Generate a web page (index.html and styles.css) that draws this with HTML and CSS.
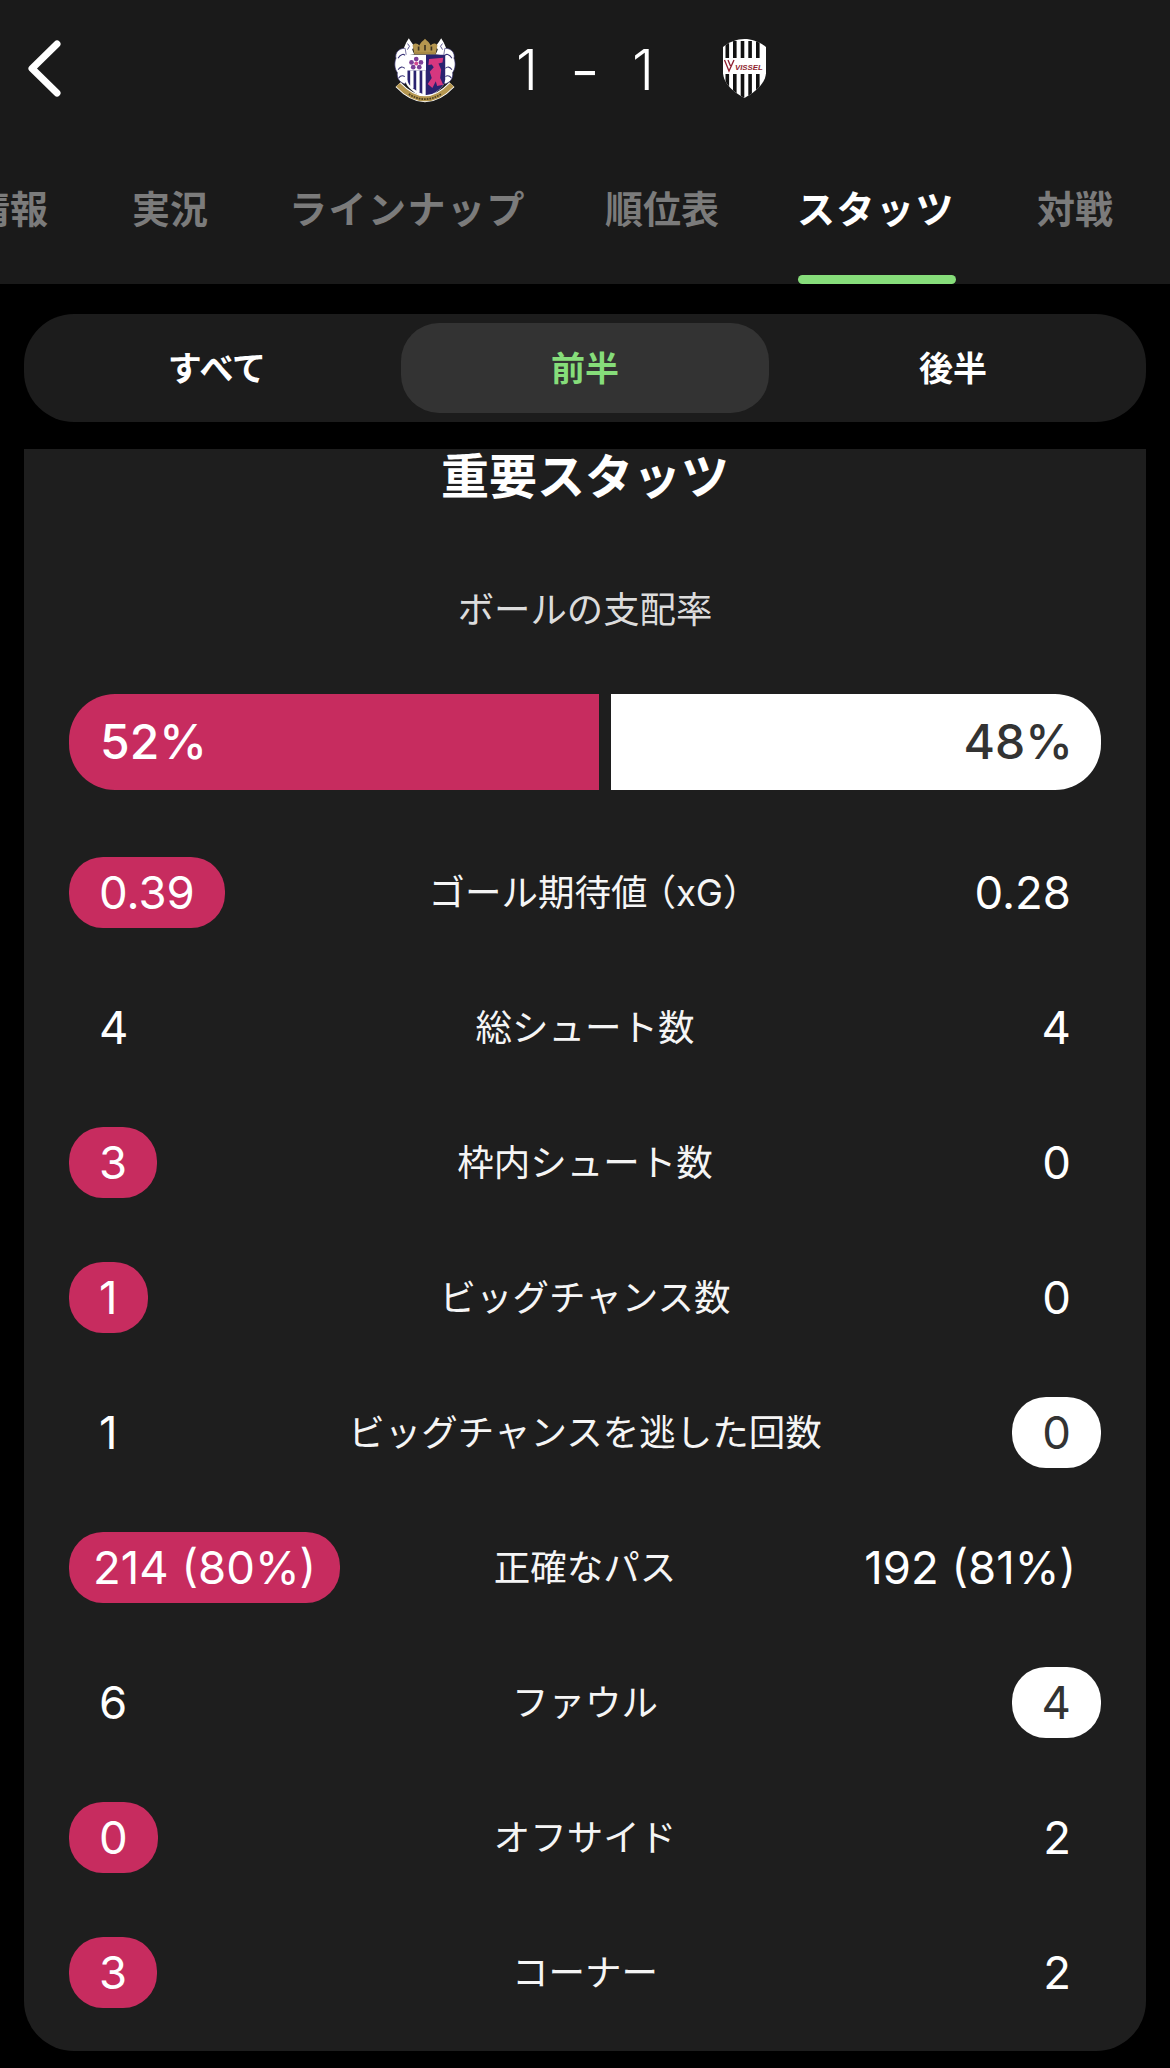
FILE: index.html
```html
<!DOCTYPE html>
<html lang="ja">
<head>
  <meta charset="UTF-8">
  <meta name="viewport" content="width=device-width, initial-scale=1.0">
  <title>スタッツ</title>
  <link rel="stylesheet" href="styles.css">
</head>
<body>
  <div class="header">
    <div class="topbar">
      <div class="topbar-left">
        <svg class="back" viewBox="0 0 33 57"><path d="M29 4 L4 28.500 L29 53" fill="none" stroke="#fff" stroke-width="7" stroke-linecap="round" stroke-linejoin="round"/></svg>
        <svg class="crest-home" viewBox="0 0 184 195">
          <defs>
            <g id="crestSide">
              <!-- griffin -->
              <path d="M28 32 L36 14 L44 0 L50 10 L60 24 L54 34 L60 48 L33 52 Z" fill="#fff"/>
              <path d="M40 16 L46 24 L40 34" fill="none" stroke="#3a3478" stroke-width="2.500"/>
              <!-- scroll -->
              <path d="M33 30 C14 30 2 44 6 60 C0 74 2 92 10 102 C8 116 14 130 32 136 L44 120 L36 48 Z" fill="#fff" stroke="#3a3478" stroke-width="2"/>
              <path d="M12 60 C20 46 30 46 34 52 M12 94 C18 84 26 84 32 90 M14 118 C20 110 26 110 32 114" fill="none" stroke="#3a3478" stroke-width="3"/>
            </g>
          </defs>
          <use href="#crestSide"/>
          <use href="#crestSide" transform="matrix(-1 0 0 1 184 0)"/>
          <!-- crown -->
          <path d="M60 44 L55 22 C61 13 70 15 75 22 C79 12 85 10 92 2 C99 10 105 12 109 22 C114 15 123 13 129 22 L124 44 Z" fill="#b4964f"/>
          <path d="M73 25 V37 M92 20 V37 M111 25 V37" stroke="#3e3522" stroke-width="5"/>
          <rect x="60" y="41" width="64" height="7" fill="#a88a45"/>
          <!-- shield -->
          <path d="M33 49 H152 V122 C152 146 118 168 92 176 C66 168 33 146 33 122 Z" fill="#fff"/>
          <path d="M95 49 H152 V122 C152 146 118 166 95 174 Z" fill="#2a2270"/>
          <path d="M40 96 H95 V170 C70 160 40 144 40 122 Z" fill="#2a2270"/>
          <path d="M48 96 H58 V148 H48 Z M66 96 H76 V160 H66 Z M84 96 H94 V170 H84 Z" fill="#fff"/>
          <!-- flower -->
          <circle cx="66" cy="62" r="7" fill="#7c3f98"/><circle cx="52" cy="72" r="7" fill="#7c3f98"/>
          <circle cx="80" cy="72" r="7" fill="#7c3f98"/><circle cx="57" cy="86" r="7" fill="#7c3f98"/>
          <circle cx="75" cy="86" r="7" fill="#7c3f98"/><circle cx="66" cy="75" r="6" fill="#d2488f"/>
          <!-- lion -->
          <path d="M104 62 L146 58 L144 72 L132 75 L140 94 L137 118 L146 138 L128 142 L124 128 L114 148 L100 136 L112 118 L106 100 L118 86 L112 78 L102 80 Z" fill="#d6377f"/>
          <!-- ribbon -->
          <path d="M12 138 Q92 222 172 138" fill="none" stroke="#fff" stroke-width="21"/>
          <path d="M12 138 Q92 222 172 138" fill="none" stroke="#b4964f" stroke-width="15"/>
          <path d="M44 166 Q92 196 140 166" fill="none" stroke="#4b3f20" stroke-width="5" stroke-dasharray="5 3"/>
        </svg>
      </div>
      <div class="score"><span>1</span><span class="dash">-</span><span>1</span></div>
      <div class="topbar-right">
        <svg class="crest-away" viewBox="0 0 45 61">
          <defs><clipPath id="awayShape"><path d="M22.500 1 C30 1 38 4 44 9 V34 C44 46 32 55 22.500 60 C13 55 1 46 1 34 V9 C7 4 15 1 22.500 1 Z"/></clipPath></defs>
          <path d="M22.500 1 C30 1 38 4 44 9 V34 C44 46 32 55 22.500 60 C13 55 1 46 1 34 V9 C7 4 15 1 22.500 1 Z" fill="#fff"/>
          <g clip-path="url(#awayShape)" fill="#111">
            <rect x="3.500" y="3" width="3.600" height="58"/><rect x="11" y="3" width="3.600" height="58"/>
            <rect x="18.700" y="3" width="3.600" height="58"/><rect x="26.300" y="3" width="3.600" height="58"/>
            <rect x="34" y="3" width="3.600" height="58"/>
          </g>
          <rect x="1" y="20" width="43" height="16" fill="#fff"/>
          <path d="M2.500 22 L7 33 L12 22 M6 22 L8.500 28" fill="none" stroke="#8f1f30" stroke-width="1.300"/>
          <text class="vissel" x="13" y="32">VISSEL</text>
        </svg>
      </div>
    </div>
    <div class="tabs">
      <div class="tab">情報</div>
      <div class="tab">実況</div>
      <div class="tab tab-lineup">ラインナップ</div>
      <div class="tab">順位表</div>
      <div class="tab active">スタッツ</div>
      <div class="tab">対戦</div>
    </div>
  </div>

  <div class="segment">
    <div class="seg-item">すべて</div>
    <div class="seg-item active">前半</div>
    <div class="seg-item">後半</div>
  </div>

  <div class="card">
    <h2 class="card-title">重要スタッツ</h2>
    <p class="possession-label">ボールの支配率</p>
    <div class="possession">
      <div class="poss-home" style="width: 530px">52%</div>
      <div class="poss-away">48%</div>
    </div>
    <div class="rows">
      <div class="row"><div class="val home-win">0.39</div><div class="label">ゴール期待値<span class="xg">（xG）</span></div><div class="val">0.28</div></div>
      <div class="row"><div class="val">4</div><div class="label">総シュート数</div><div class="val">4</div></div>
      <div class="row"><div class="val home-win">3</div><div class="label">枠内シュート数</div><div class="val">0</div></div>
      <div class="row"><div class="val home-win">1</div><div class="label">ビッグチャンス数</div><div class="val">0</div></div>
      <div class="row"><div class="val">1</div><div class="label">ビッグチャンスを逃した回数</div><div class="val away-win">0</div></div>
      <div class="row"><div class="val home-win tight">214 (80%)</div><div class="label">正確なパス</div><div class="val tight">192 (81%)</div></div>
      <div class="row"><div class="val">6</div><div class="label">ファウル</div><div class="val away-win">4</div></div>
      <div class="row"><div class="val home-win">0</div><div class="label">オフサイド</div><div class="val">2</div></div>
      <div class="row"><div class="val home-win">3</div><div class="label">コーナー</div><div class="val">2</div></div>
    </div>
  </div>
</body>
</html>
```

FILE: styles.css
```css
body {
  font-family: Inter, "Noto Sans CJK JP", sans-serif;
  background-color: #000;
  color: #fff;
  margin: 0;
  padding: 0;
  overflow: hidden;
}

.header {
  background: #1a1a1a;
  height: 284px;
  overflow: hidden;
}

.topbar {
  display: grid;
  grid-template-columns: 1fr auto 1fr;
  align-items: center;
  height: 66px;
  padding: 37px 0 0 8px;
}

.topbar-left {
  display: flex;
  align-items: center;
  justify-content: space-between;
  padding-left: 20px;
}

.back {
  width: 33px;
  height: 57px;
  margin-bottom: 5px;
}

.crest-home {
  width: 62px;
  height: 66px;
}

.crest-away {
  width: 45px;
  height: 61px;
  display: block;
  margin-bottom: 5px;
}

.vissel {
  font-family: "Liberation Sans", sans-serif;
  font-size: 7.800px;
  font-weight: bold;
  font-style: italic;
  fill: #8f1f30;
}

.score {
  display: flex;
  gap: 32px;
  margin: 0 68px 2px 60px;
  font-size: 56px;
  font-weight: 300;
  line-height: 66px;
}

.score .dash {
  font-size: 66px;
}

.tabs {
  display: flex;
  gap: 84px;
  margin: 83px 0 0 -28px;
  align-items: flex-start;
}

.tab {
  flex: none;
  font-size: 38px;
  font-weight: 700;
  line-height: 46px;
  color: #7b7b7b;
}

.tab-lineup {
  letter-spacing: 1.500px;
  margin: 0 -5px 0 -3px;
}

.tab.active {
  color: #fff;
  letter-spacing: 1.500px;
  margin: 0 -2px 0 -6px;
}

.tab.active::after {
  content: "";
  display: block;
  height: 9px;
  margin: 43px -1px 0 1px;
  background: #86dd7a;
  border-radius: 5px;
}

.segment {
  display: grid;
  grid-template-columns: repeat(3, 1fr);
  margin: 30px 24px 0;
  padding: 9px;
  height: 90px;
  background: #1c1c1c;
  border-radius: 50px;
}

.seg-item {
  display: flex;
  align-items: center;
  justify-content: center;
  padding-bottom: 3px;
  box-sizing: border-box;
  font-size: 34px;
  font-weight: 700;
  border-radius: 38px;
}

.seg-item.active {
  background: #333;
  color: #86dd7a;
}

.card {
  margin: 27px 24px 0;
  padding: 0 45px 42px;
  height: 1602px;
  box-sizing: border-box;
  background: #1e1e1e;
  border-radius: 0 0 50px 50px;
}

.card-title {
  margin: 0;
  padding-top: 1px;
  font-size: 48px;
  font-weight: 700;
  line-height: 54px;
  text-align: center;
}

.possession-label {
  margin: 80px 0 0;
  font-size: 36.400px;
  line-height: 52px;
  text-align: center;
  color: #dcdcdc;
}

.possession {
  display: flex;
  gap: 12px;
  height: 96px;
  margin-top: 58px;
  font-size: 48px;
  font-weight: 500;
  line-height: 96px;
}

.poss-home {
  flex: none;
  padding-left: 31px;
  box-sizing: border-box;
  background: #c72c5f;
  border-radius: 46px 0 0 46px;
}

.poss-away {
  flex: 1;
  padding-right: 28px;
  text-align: right;
  background: #fff;
  color: #333;
  border-radius: 0 46px 46px 0;
}

.rows {
  display: flex;
  flex-direction: column;
  gap: 64px;
  margin-top: 67px;
}

.row {
  display: grid;
  grid-template-columns: 1fr auto 1fr;
  align-items: center;
  height: 71px;
}

.row .val:last-child {
  justify-self: end;
}

.val {
  justify-self: start;
  padding: 0 30px;
  font-size: 45.500px;
  line-height: 71px;
  white-space: nowrap;
  border-radius: 34px;
}

.val.tight {
  padding: 0 25px;
}

.val.home-win {
  background: #c72c5f;
}

.val.home-win.tight {
  padding: 0 24px;
}

.val.away-win {
  background: #fff;
  color: #333;
}

.label {
  font-size: 36.500px;
  line-height: 52px;
  color: #f5f5f5;
  text-align: center;
  white-space: nowrap;
}

.xg {
  margin: 0 -18px 0 -8px;
}
```
